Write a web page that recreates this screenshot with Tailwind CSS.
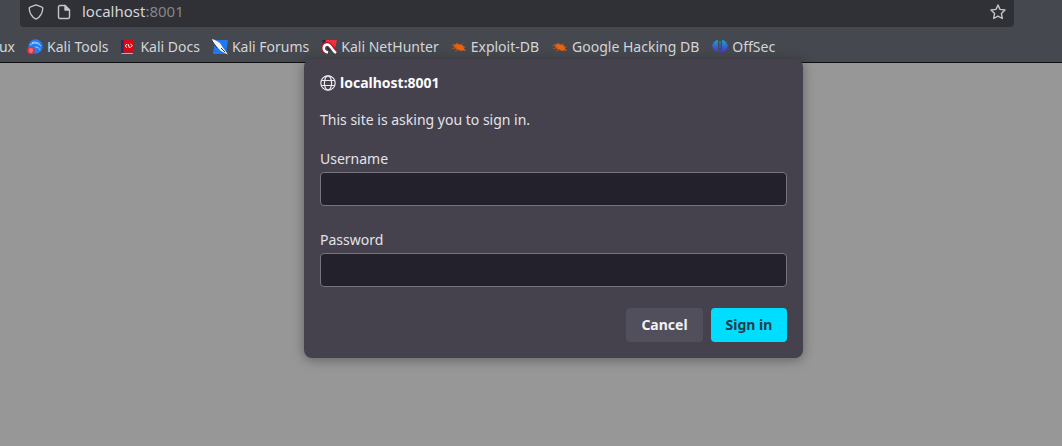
<!DOCTYPE html>
<html lang="en">
<head>
<meta charset="utf-8">
<title>localhost:8001</title>
<script src="https://cdn.jsdelivr.net/npm/@tailwindcss/browser@4"></script>
</head>
<body class="relative flex min-h-screen flex-col overflow-hidden bg-[#979798] font-['Noto_Sans',sans-serif] text-sm text-[#d4d5d8]">
<svg class="hidden">
  <symbol id="ant" viewBox="0 0 16 16">
    <path d="M2 5l3 .5L6.500 4l1.500 1.500 2.500 0 1.500 1.500 1.500 1-.5 1.500 2 2.500-3-.8-2 .8-2.500-1.200-2-.3-1-1.500-2-1.500 1-1z" fill="#e8630f"/>
    <path d="M.5 6.500l4 1M1 9.500l5-.5M4 12l4-1.500M10 6l2.500-2M12 8.500l3-.5M5 4l2 2" fill="none" stroke="#b0561f" stroke-width=".8"/>
  </symbol>
</svg>
<header class="border-b border-[#101113] bg-[#45484e]">
  <div class="mr-12 ml-5 flex h-[27px] items-center rounded-b-sm bg-[#303136] pr-2 pb-1 pl-2">
    <svg class="size-4 shrink-0" viewBox="0 0 16 16" fill="none" stroke="#c4c5c8" stroke-width="1.3" stroke-linejoin="round"><path d="M8 .8L14 3.100c.5.200.8.500.8 1C14.500 9 12.500 13 8 15.200 3.500 13 1.500 9 1.200 4.100c0-.5.300-.8.800-1z"/></svg>
    <svg class="ml-3 size-4 shrink-0" viewBox="0 0 16 16" fill="none" stroke="#c4c5c8" stroke-width="1.400" stroke-linejoin="round"><path d="M4 1.500h5l4.500 4.500v7a1.500 1.500 0 0 1-1.500 1.500H4A1.500 1.500 0 0 1 2.500 13V3A1.500 1.500 0 0 1 4 1.500z"/><path d="M9 1.500V6h4.500z" fill="#c4c5c8"/></svg>
    <div class="ml-2.5 grow text-[15px] whitespace-nowrap">localhost<span class="text-[#85868a]">:8001</span></div>
    <button type="button" aria-label="Bookmark this page" class="shrink-0"><svg class="size-4" viewBox="0 0 16 16" fill="none" stroke="#c4c5c8" stroke-width="1.400" stroke-linejoin="round"><path d="M8 1l2 4.400 5 .6-3.600 3.500.9 5L8 12.200l-4.300 2.300.9-5L1 6l5-.6z"/></svg></button>
  </div>
  <nav class="flex h-[35px] items-center gap-3 pt-1 whitespace-nowrap">
    <a href="#" class="-ml-1 w-[19px] text-right">ux</a>
    <a href="#" class="flex items-center gap-1"><svg class="size-4" viewBox="0 0 16 16"><circle cx="8.500" cy="7.500" r="7.200" fill="#267df0"/><path d="M3 6c4-3 8-2 11 1M5 3.500c4-1 6 0 8 2M8 8c3 0 4 1 5 3" fill="none" stroke="#a9cef5"/><circle cx="4" cy="11.500" r="3.800" fill="#e3313c"/><path d="M2.500 10h3M3 10v3h2v-3" stroke="#f7aaaf" fill="none" stroke-width=".8"/></svg>Kali Tools</a>
    <a href="#" class="flex items-center gap-1"><svg class="size-4" viewBox="0 0 16 16"><path d="M1 1h3v13H1z" fill="#272c68"/><path d="M3.500.5H14v13H3.500z" fill="#dc0712"/><path d="M1.500 14.500H13" stroke="#c9a6aa"/><path d="M7 5L5.200 7l1.800 1.500M10.500 5l1.800 1.500-1.800 2M8 5l1.500 4" fill="none" stroke="#fff"/></svg>Kali Docs</a>
    <a href="#" class="flex items-center gap-1"><svg class="size-4" viewBox="0 0 16 16"><path d="M4 1h12l-2 14H1l1-7z" fill="#2179f1"/><path d="M0 0l3 1 5 3 2.500 4 5.500 7.500-7-3.500-4-4-3-3z" fill="#f6f6f4"/><path d="M0 2l3 4 2 3M9 9l4 4" fill="none" stroke="#27364a" stroke-width="1"/></svg>Kali Forums</a>
    <a href="#" class="flex items-center gap-1"><svg class="size-4" viewBox="0 0 16 16"><path d="M3 1h13l-3 12-4-8z" fill="#f2303d"/><path d="M1 1h4L2 5z" fill="#26272b"/><path d="M3 13C0 8 3 4 7 5c3 .5 4 4 8 8" fill="none" stroke="#ac1830" stroke-width="4"/><path d="M7 13.500C1 12.500 2 6 6 5.500c4-.5 4 5 9 8.500" fill="none" stroke="#fff" stroke-width="2.500"/><path d="M6 8.500l3 3" stroke="#27282d" stroke-width="1.500"/></svg>Kali NetHunter</a>
    <a href="#" class="flex items-center gap-1"><svg class="size-4"><use href="#ant"/></svg>Exploit-DB</a>
    <a href="#" class="ml-px flex items-center gap-1"><svg class="size-4"><use href="#ant"/></svg>Google Hacking DB</a>
    <a href="#" class="ml-px flex items-center gap-1"><svg class="size-4" viewBox="0 0 16 16"><defs><linearGradient id="os" x2="0" y2="1"><stop stop-color="#16a8c6"/><stop offset=".5" stop-color="#365fd1"/><stop offset="1" stop-color="#5f22b8"/></linearGradient></defs><path d="M6 .8v13C-1.500 11-1.500 3 6 .8zM10 .8v13C17.500 11 17.500 3 10 .8zM7.400 2h1.200v13.500H7.400z" fill="url(#os)"/></svg>OffSec</a>
  </nav>
</header>
<main>
  <form role="dialog" aria-labelledby="site" class="absolute top-[59px] left-[304px] w-[499px] rounded-lg bg-[#45424e] p-4 text-[#e3e2e7] shadow-[0_2px_12px_#00000059]">
    <h1 id="site" class="flex h-4 items-center gap-1 font-bold text-[#fbfbfe]"><svg class="size-4" viewBox="0 0 16 16" fill="none" stroke="#e9e9ed" stroke-width="1.200"><circle cx="8" cy="8" r="7.200"/><ellipse cx="8" cy="8" rx="3.600" ry="7.200"/><path d="M1.500 5.500h13M1.500 10.500h13"/></svg>localhost:8001</h1>
    <p class="mt-[19px] leading-5">This site is asking you to sign in.</p>
    <label for="user" class="mt-[19px] block leading-5">Username</label>
    <input id="user" type="text" class="mt-[3px] block h-[34px] w-full rounded-sm border border-[#77757e] bg-[#23212b] px-2">
    <label for="pass" class="mt-6 block leading-5">Password</label>
    <input id="pass" type="password" class="mt-[3px] block h-[34px] w-full rounded-sm border border-[#77757e] bg-[#23212b] px-2">
    <div class="mt-[21px] flex justify-end gap-2 font-bold">
      <button type="button" class="h-[34px] w-[77px] rounded-sm bg-[#514f5b] text-[#f2f2f5]">Cancel</button>
      <button type="submit" class="h-[34px] w-[76px] rounded-sm bg-[#00ddff] text-[#243b48]">Sign in</button>
    </div>
  </form>
</main>
</body>
</html>
